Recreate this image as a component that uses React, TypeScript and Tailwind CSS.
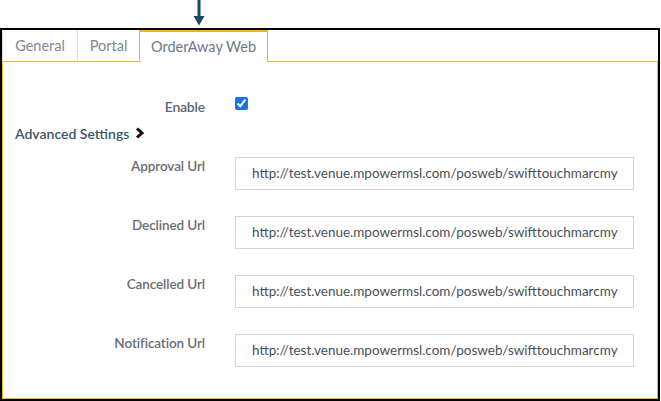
import React from "react";

const url = "http://test.venue.mpowermsl.com/posweb/swifttouchmarcmy";

const urlFields = [
  { label: "Approval Url", value: url },
  { label: "Declined Url", value: url },
  { label: "Cancelled Url", value: url },
  { label: "Notification Url", value: url },
];

const Tab = ({ label, width, active }: { label: string; width: string; active?: boolean }) => {
  if (active) {
    return (
      <div className={`${width} h-full flex items-center justify-center border-t-2 border-x border-[#e8b923] text-[14.5px] text-[#6b7887]`}>
        {label}
      </div>
    );
  }
  return (
    <div className={`${width} h-full flex items-center justify-center border-l border-[#dcdcdc] border-b border-b-[#e8b923] text-[14.5px] text-[#7b8896]`}>
      {label}
    </div>
  );
};

export default function App() {
  return (
    <div
      className="w-[661px] h-[401px] bg-white overflow-hidden"
      style={{ fontFamily: "Lato, 'Noto Sans', sans-serif" }}
    >
      {/* annotation arrow above the tab */}
      <div className="h-[28px] relative">
        <svg className="absolute left-[193px] top-0" width="12" height="27" viewBox="0 0 12 27">
          <rect x="4.5" y="0" width="3" height="19" fill="#124a68" />
          <polygon points="0.5,16 11.5,16 6,25.5" fill="#124a68" />
        </svg>
      </div>

      <div className="w-[660px] h-[373px] border-2 border-black flex flex-col">
        <div className="flex h-[32px]">
          <Tab label="General" width="w-[75px]" />
          <Tab label="Portal" width="w-[62px]" />
          <Tab label="OrderAway Web" width="w-[129px]" active />
          <div className="flex-1 border-b border-[#e8b923]" />
        </div>

        <div className="flex-1 border-x border-b border-[#e8b923] pt-[35px]">
          <div className="flex items-center h-[18px]">
            <div className="w-[202px] text-right text-[14px] font-semibold text-[#5f6670] tracking-[-0.2px]">Enable</div>
            <input
              type="checkbox"
              defaultChecked
              className="ml-[30px] w-[13px] h-[13px] accent-[#1a73e8] -mt-[5px]"
            />
          </div>

          <div className="flex items-center h-[18px] mt-[9px] pl-[12px]">
            <span className="text-[14px] font-semibold text-[#3e5567]">Advanced Settings</span>
            <svg className="ml-[6px]" width="10" height="12" viewBox="0 0 10 12">
              <polyline points="2,1.5 7,6 2,10.5" fill="none" stroke="#111" strokeWidth="3" />
            </svg>
          </div>

          <div className="flex flex-col gap-[26px] mt-[15px]">
            {urlFields.map((f) => (
              <div key={f.label} className="flex items-start">
                <div className="w-[202px] text-right text-[13.5px] font-semibold text-[#686d73] leading-[18px] tracking-[-0.1px]">
                  {f.label}
                </div>
                <div className="ml-[30px] w-[399px] h-[33px] border border-[#d4d4d4] flex items-center pl-[16px] overflow-hidden whitespace-nowrap text-[13.5px] text-[#4a4f55]">
                  {f.value}
                </div>
              </div>
            ))}
          </div>
        </div>
      </div>
    </div>
  );
}
